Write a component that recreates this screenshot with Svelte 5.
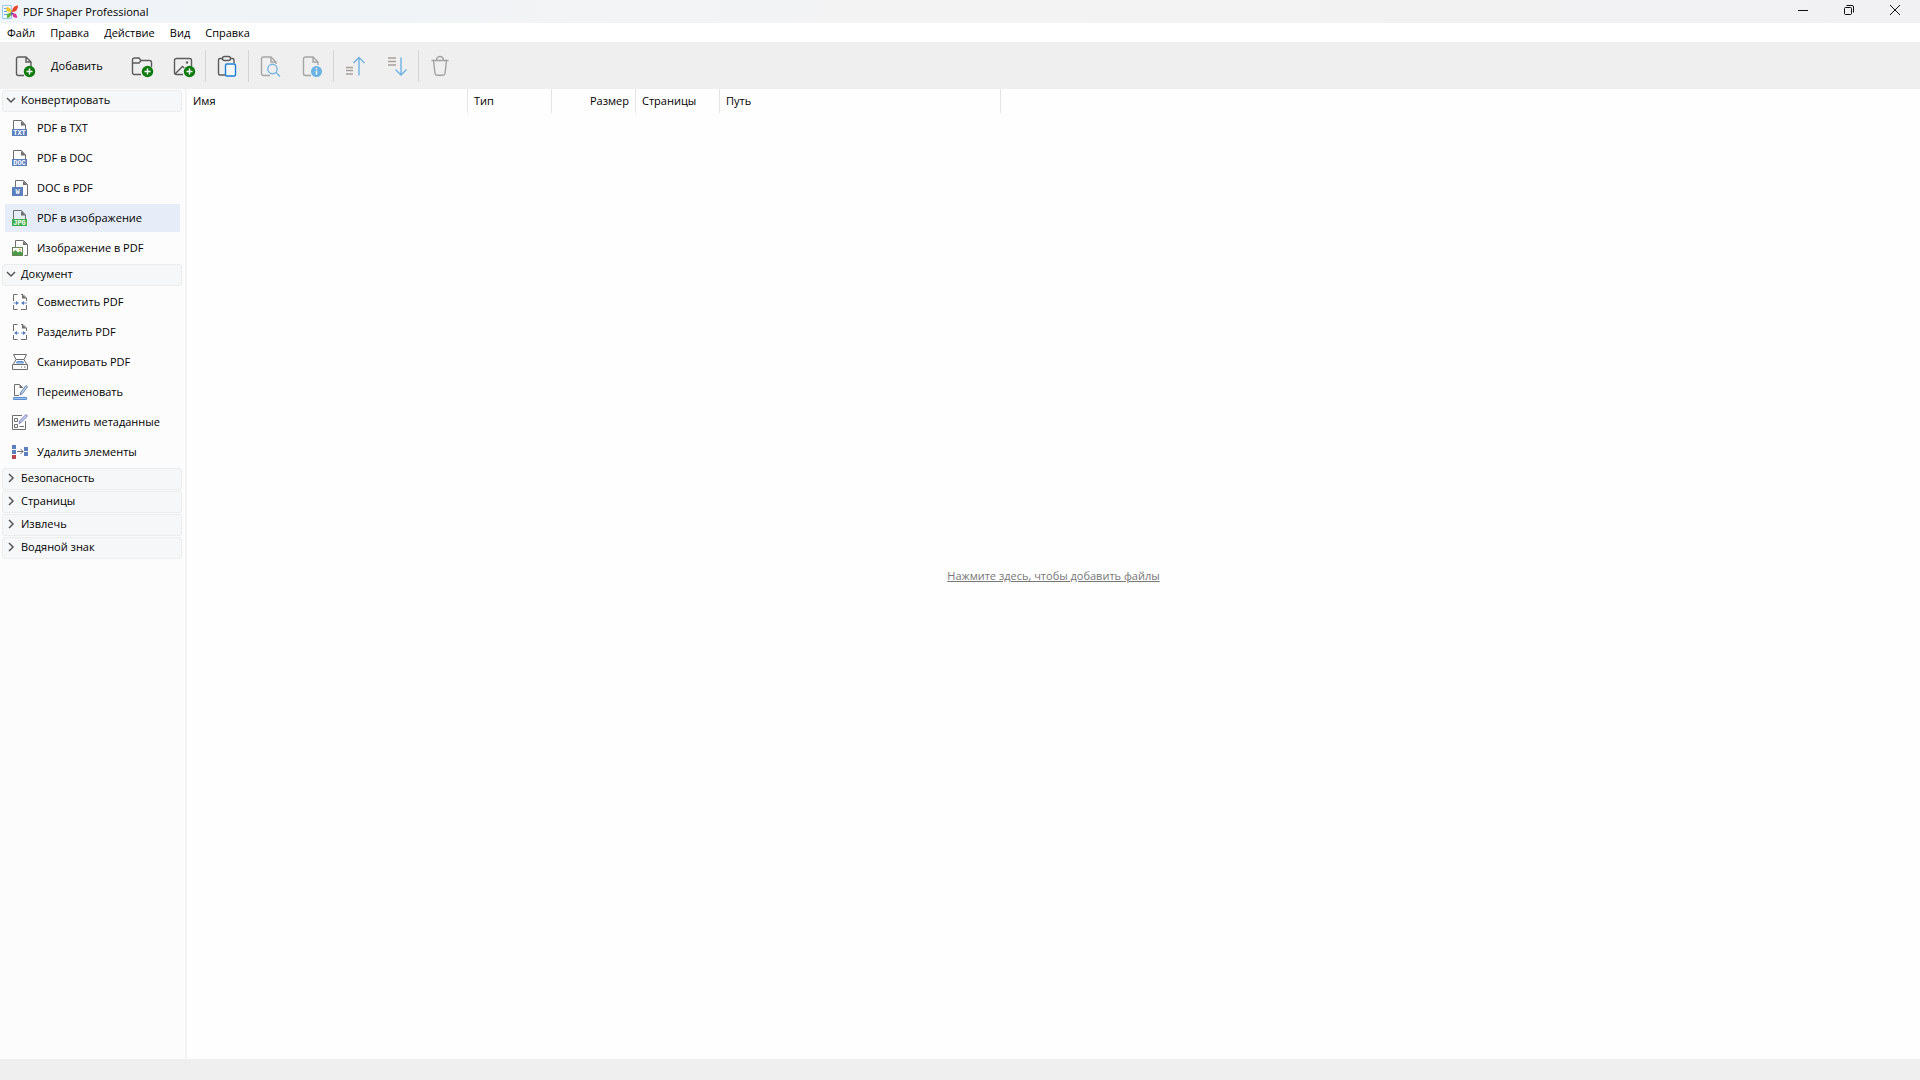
<script lang="ts">
  interface Tool {
    id: string;
    label: string;
  }
  interface Group {
    title: string;
    open: boolean;
    tools: Tool[];
  }

  const menus = ['Файл', 'Правка', 'Действие', 'Вид', 'Справка'];

  const actions = [
    [
      { id: 'folder', label: 'Добавить папку', disabled: false },
      { id: 'picture', label: 'Добавить изображение', disabled: false },
    ],
    [{ id: 'paste', label: 'Вставить', disabled: false }],
    [
      { id: 'preview', label: 'Просмотр', disabled: true },
      { id: 'info', label: 'Свойства', disabled: true },
    ],
    [
      { id: 'up', label: 'Вверх', disabled: true },
      { id: 'down', label: 'Вниз', disabled: true },
    ],
    [{ id: 'trash', label: 'Удалить', disabled: true }],
  ];

  let groups = $state<Group[]>([
    {
      title: 'Конвертировать',
      open: true,
      tools: [
        { id: 'txt', label: 'PDF в TXT' },
        { id: 'doc', label: 'PDF в DOC' },
        { id: 'word', label: 'DOC в PDF' },
        { id: 'jpg', label: 'PDF в изображение' },
        { id: 'image', label: 'Изображение в PDF' },
      ],
    },
    {
      title: 'Документ',
      open: true,
      tools: [
        { id: 'merge', label: 'Совместить PDF' },
        { id: 'split', label: 'Разделить PDF' },
        { id: 'scan', label: 'Сканировать PDF' },
        { id: 'rename', label: 'Переименовать' },
        { id: 'meta', label: 'Изменить метаданные' },
        { id: 'remove', label: 'Удалить элементы' },
      ],
    },
    { title: 'Безопасность', open: false, tools: [] },
    { title: 'Страницы', open: false, tools: [] },
    { title: 'Извлечь', open: false, tools: [] },
    { title: 'Водяной знак', open: false, tools: [] },
  ]);

  let selected = $state('jpg');
</script>

{#snippet badge()}
  <circle cx="16.5" cy="17.5" r="5.7" fill="#107c10" stroke="none" />
  <path d="M16.5 14.5v6M13.5 17.5h6" stroke="#fff" stroke-width="1.4" />
{/snippet}

{#snippet actionIcon(id: string)}
  <svg class="action-icon" viewBox="0 0 24 24" fill="none" stroke="#5c5c5c" stroke-width="1.4" aria-hidden="true">
    {#if id === 'add'}
      <path d="M11 21.5H5.5a2 2 0 0 1-2-2V5a2 2 0 0 1 2-2H13l5 5v5M13 3v5h5" />
      {@render badge()}
    {:else if id === 'folder'}
      <path d="M11 20.5H4.5a2 2 0 0 1-2-2V6a2 2 0 0 1 2-2H9l2 2.500h8.500a2 2 0 0 1 2 2V13M2.500 9H9l2-2.500" />
      <g class="shifted">{@render badge()}</g>
    {:else if id === 'picture'}
      <path d="M11 20.500H4.500a2 2 0 0 1-2-2v-12a2 2 0 0 1 2-2h13a2 2 0 0 1 2 2V13" />
      <path d="M3 20l7.500-7.500 1.800 1.500" />
      <circle cx="15" cy="8.500" r="1.200" fill="#5c5c5c" stroke="none" />
      <g class="shifted">{@render badge()}</g>
    {:else if id === 'paste'}
      <path d="M8 4.500H5a1.500 1.500 0 0 0-1.500 1.500v13.500A1.500 1.500 0 0 0 5 21h5M15 4.500h2.500A1.500 1.500 0 0 1 19 6v3" />
      <rect x="7.500" y="2.500" width="8" height="4" rx="2" />
      <rect x="10.500" y="10" width="10" height="12" rx="1.500" fill="#f8f8f8" stroke="#1a7fd9" />
    {:else if id === 'preview'}
      <path d="M12 21.500H5.500a2 2 0 0 1-2-2V5a2 2 0 0 1 2-2h7.500l5 5v2M13 3v5h5" stroke="#a6a6a6" />
      <circle cx="14.500" cy="15" r="4.700" stroke="#76b5e3" />
      <path d="M18 18.500l4 4" stroke="#76b5e3" />
    {:else if id === 'info'}
      <path d="M11 21.500H5.500a2 2 0 0 1-2-2V5a2 2 0 0 1 2-2h7.500l5 5v3M13 3v5h5" stroke="#a6a6a6" />
      <circle cx="16.500" cy="17.500" r="5.500" fill="#6cb2e4" stroke="none" />
      <path d="M16.500 16.500v4M16.500 14v1.300" stroke="#fff" />
    {:else if id === 'up'}
      <path d="M3 13.500h7M3 16.500h7M3 20h7" stroke="#a9a09c" />
      <path d="M16 21.500V4M10.500 9L16 3.500 21.500 9" stroke="#6fb2e3" />
    {:else if id === 'down'}
      <path d="M3 4h8M3 7.500h8M3 11h8" stroke="#a9a09c" />
      <path d="M16 3.500V21M10.500 15.500L16 21l5.500-5.500" stroke="#6fb2e3" />
    {:else if id === 'trash'}
      <path d="M3.500 6.500h17M8.500 6a3.500 3.500 0 0 1 7 0M5.500 6.500l1.500 13a2 2 0 0 0 2 1.700h6a2 2 0 0 0 2-1.700l1.500-13" stroke="#a2a2a2" />
    {/if}
  </svg>
{/snippet}

{#snippet toolIcon(id: string)}
  <svg class="tool-icon" viewBox="0 0 16 16" fill="none" stroke="#6e6e6e" aria-hidden="true">
    {#if id === 'txt' || id === 'doc' || id === 'jpg'}
      <path d="M1.500 9V.500h8L13.500 5v4" />
      <path d="M9 1v4.500h5z" fill="#6e6e6e" stroke="none" />
      <rect y="9" width="15" height="7" fill={id === 'jpg' ? '#3fae49' : '#5b7fbd'} stroke="none" />
      <text x="7.500" y="15" class="tag">{id.toUpperCase()}</text>
    {:else if id === 'word'}
      <path d="M3.500 7V.500h8l4 4v11h-3" />
      <path d="M11 1v4h4.500z" fill="#6e6e6e" stroke="none" />
      <rect y="7" width="11" height="9" fill="#5b7fbd" stroke="none" />
      <text x="5.500" y="14" class="tag">W</text>
    {:else if id === 'image'}
      <path d="M3.500 7V.500h8l4 4v11h-3" />
      <path d="M11 1v4h4.500z" fill="#6e6e6e" stroke="none" />
      <rect x=".5" y="7.500" width="10" height="8" fill="#fff" stroke="#66865a" />
      <path d="M1 15v-3l2.500-2 2.500 2.500 2-1.500 2.500 2v2z" fill="#4b9b46" stroke="none" />
      <circle cx="8" cy="9.500" r="1" fill="#e0a53c" stroke="none" />
    {:else if id === 'merge' || id === 'split'}
      <path d="M5.500 .500h-4V7M1.500 11v4.500h4M9 .500h2L14.500 4v3M14.500 11v4.500H9" />
      <path d="M10 .500v4h4.500z" fill="#6e6e6e" stroke="none" />
      {#if id === 'merge'}
        <path d="M1.500 9H5M15 9h-4" stroke="#6d8bc9" />
        <path d="M4 7l3 2-3 2zM12 7L9 9l3 2z" fill="#5478bd" stroke="none" />
      {:else}
        <path d="M4 9h3M9 9h3" stroke="#6d8bc9" />
        <path d="M5 7L2 9l3 2zM11 7l3 2-3 2z" fill="#5478bd" stroke="none" />
      {/if}
    {:else if id === 'scan'}
      <path d="M.5 15.500v-5h15v5zM1.500 10L4 5.500h8l2.500 4.500M4 5.500L1.500 .500h13L12 5.500" />
      <path d="M5 7.500h6l.5 1.500h-7z" fill="#b7d0f0" stroke="#5b8fcf" />
      <path d="M9 13h1M12 13h1.500" />
    {:else if id === 'rename'}
      <path d="M7 11.500H2.500V.500h5L11 4" />
      <path d="M7.500 .500V4H11z" fill="#6e6e6e" stroke="none" />
      <path d="M8 11l1-3 5-6.500 1.500 1.200-5 6.800z" fill="#c5d8ee" stroke="#6684ad" />
      <path d="M1.500 13.500h13v2h-13z" fill="#9fc3ec" stroke="#5b8fcf" />
    {:else if id === 'meta'}
      <path d="M10 1.500H.500v14h13V7" />
      <path d="M2.500 4.500h3v3h-3zM2.500 10.500h3v3h-3zM7.500 12.500H12" />
      <path d="M7 9.500l1-3 6-6 1.500 1.500-6 6z" fill="#cdd2f2" stroke="#7580b8" />
    {:else if id === 'remove'}
      <path d="M0 1h4v4H0zM0 6h4v4H0zM12 3h4v4h-4zM12 8h4v4h-4z" fill="#5b7fbd" stroke="none" />
      <path d="M0 11h4v4H0z" fill="#b9474d" stroke="none" />
      <path d="M5 7.500h6M8.500 5l2.500 2.500L8.500 10" />
    {/if}
  </svg>
{/snippet}

<div class="window">
  <header class="titlebar">
    <svg class="logo" viewBox="0 0 16 16" aria-hidden="true">
      <path d="M.5 1.500h9v13h-9z" fill="#eef7fd" stroke="#9ccbe9" />
      <path d="M2 4.500h3M2 7.500h3M2 10.500h3" stroke="#5ea9dc" />
      <path d="M9 8.500L4.500 7 4.500 3Q8 3 9.500 7z" fill="#f7c51e" />
      <path d="M9.500 8L11 4q2-3 5-2.500 0 4-3 6z" fill="#e8452c" />
      <path d="M9 8.500L5 10v4q3 0 4-3z" fill="#63b332" />
      <path d="M10 8.500l4 1.500 1.500 3.500q-3 1-4.500-1z" fill="#d83a9c" />
      <path d="M9 8l2 1-1.500 3z" fill="#463c9a" />
    </svg>
    <h1>PDF Shaper Professional</h1>
    <div class="window-controls">
      <button type="button" aria-label="Свернуть">
        <svg viewBox="0 0 12 12"><path d="M1 6.500h10" /></svg>
      </button>
      <button type="button" aria-label="Восстановить">
        <svg viewBox="0 0 12 12">
          <rect x="1.500" y="3.500" width="7" height="7" rx="1" />
          <path d="M3.500 1.500H9a1.500 1.500 0 0 1 1.500 1.500v5.500" />
        </svg>
      </button>
      <button type="button" aria-label="Закрыть">
        <svg viewBox="0 0 12 12"><path d="M1 1l10 10M11 1L1 11" /></svg>
      </button>
    </div>
  </header>

  <nav class="menubar">
    {#each menus as menu (menu)}
      <button type="button">{menu}</button>
    {/each}
  </nav>

  <div class="toolbar">
    <button type="button" class="add">
      {@render actionIcon('add')}
      <span>Добавить</span>
    </button>
    {#each actions as section, i (i)}
      <div class="action-group">
        {#each section as action (action.id)}
          <button type="button" class="action" aria-label={action.label} disabled={action.disabled}>
            {@render actionIcon(action.id)}
          </button>
        {/each}
      </div>
    {/each}
  </div>

  <div class="body">
    <aside class="sidebar">
      {#each groups as group (group.title)}
        <button type="button" class="group-title" aria-expanded={group.open} onclick={() => (group.open = !group.open)}>
          <svg class="chevron" class:open={group.open} viewBox="0 0 10 10" aria-hidden="true">
            <path d="M3 1l4 4-4 4" />
          </svg>
          <span>{group.title}</span>
        </button>
        {#if group.open && group.tools.length > 0}
          <ul class="tools">
            {#each group.tools as tool (tool.id)}
              <li>
                <button type="button" class="tool" class:selected={selected === tool.id} onclick={() => (selected = tool.id)}>
                  {@render toolIcon(tool.id)}
                  <span>{tool.label}</span>
                </button>
              </li>
            {/each}
          </ul>
        {/if}
      {/each}
    </aside>

    <main class="files">
      <table>
        <thead>
          <tr>
            <th class="wide">Имя</th>
            <th>Тип</th>
            <th class="number">Размер</th>
            <th>Страницы</th>
            <th class="wide">Путь</th>
          </tr>
        </thead>
      </table>
      <div class="empty">
        <a href="#add">Нажмите здесь, чтобы добавить файлы</a>
      </div>
    </main>
  </div>

  <footer class="statusbar"></footer>
</div>

<style>
  :global(body) {
    margin: 0;
  }
  .window {
    display: flex;
    flex-direction: column;
    min-height: 100vh;
    background: #fdfdfd;
    color: #000;
    font-family: 'Segoe UI', 'Open Sans', 'Noto Sans', sans-serif;
    font-size: 11px;
    line-height: 16px;
  }
  button {
    margin: 0;
    padding: 0;
    border: 0;
    background: none;
    color: inherit;
    font: inherit;
  }
  svg {
    display: block;
    flex-shrink: 0;
  }
  .titlebar {
    display: flex;
    align-items: center;
    height: 23px;
    padding: 0 2px;
    background: linear-gradient(90deg, #eff4f8, #f3f3f3 50%, #f1f1f3);
  }
  .logo {
    width: 16px;
    height: 16px;
  }
  h1 {
    margin: 0 0 0 5px;
    font-size: 11px;
    font-weight: 400;
  }
  .window-controls {
    display: flex;
    align-self: stretch;
    margin-left: auto;
  }
  .window-controls button {
    display: flex;
    justify-content: center;
    width: 46px;
    padding-top: 4px;
  }
  .window-controls svg {
    width: 12px;
    height: 12px;
    fill: none;
    stroke: #111;
  }
  .menubar {
    display: flex;
    align-items: center;
    gap: 15px;
    height: 19px;
    padding: 0 7px;
    background: #fff;
  }
  .toolbar {
    display: flex;
    align-items: center;
    height: 47px;
    background: #efefef;
  }
  .add {
    display: flex;
    align-items: center;
    gap: 14px;
    width: 121px;
    padding-left: 13px;
  }
  .action-icon {
    width: 24px;
    height: 24px;
  }
  .shifted {
    transform: translate(1px, 0);
  }
  .action-group {
    display: flex;
  }
  .action-group + .action-group {
    border-left: 1px solid #d4d4d4;
  }
  .action {
    display: flex;
    align-items: center;
    justify-content: center;
    width: 42px;
    height: 32px;
  }
  .body {
    display: flex;
    flex: 1;
  }
  .sidebar {
    box-sizing: border-box;
    flex: 0 0 187px;
    padding: 1px 3px 0 2px;
    border-right: 2px solid #f4f4f4;
    background: #fcfcfc;
  }
  .group-title {
    display: flex;
    align-items: center;
    gap: 5px;
    box-sizing: border-box;
    width: 100%;
    height: 22px;
    margin-bottom: 1px;
    padding: 0 3px 2px;
    border: 1px solid #eaecee;
    border-radius: 3px;
    background: #f5f7f8;
  }
  .chevron {
    width: 10px;
    height: 10px;
    fill: none;
    stroke: #555;
    stroke-width: 1.5;
  }
  .chevron.open {
    transform: rotate(90deg);
  }
  .tools {
    display: flex;
    flex-direction: column;
    gap: 2px;
    margin: 0;
    padding: 1px 2px 2px 3px;
    list-style: none;
  }
  .tool {
    display: flex;
    align-items: center;
    gap: 9px;
    width: 100%;
    height: 28px;
    padding: 0 7px;
    white-space: nowrap;
  }
  .tool.selected {
    background: #e7edf8;
  }
  .tool-icon {
    width: 16px;
    height: 16px;
  }
  .tag {
    fill: #fff;
    stroke: none;
    font-family: 'Liberation Mono', monospace;
    font-size: 7px;
    font-weight: 700;
    text-anchor: middle;
  }
  .files {
    display: flex;
    flex: 1;
    flex-direction: column;
    align-items: flex-start;
    background: #fefefe;
  }
  table {
    border-collapse: separate;
    border-spacing: 0;
    table-layout: fixed;
  }
  th {
    box-sizing: border-box;
    width: 84px;
    height: 24px;
    padding: 0 6px;
    border-right: 1px solid #e4e4e4;
    font-weight: 400;
    text-align: left;
    white-space: nowrap;
  }
  th.wide {
    width: 281px;
  }
  th.number {
    text-align: right;
  }
  .empty {
    display: flex;
    flex: 1;
    align-items: center;
    align-self: stretch;
    justify-content: center;
    padding-bottom: 20px;
  }
  .empty a {
    color: #777;
    text-underline-offset: 1px;
  }
  .statusbar {
    height: 21px;
    background: #efefef;
  }
</style>
